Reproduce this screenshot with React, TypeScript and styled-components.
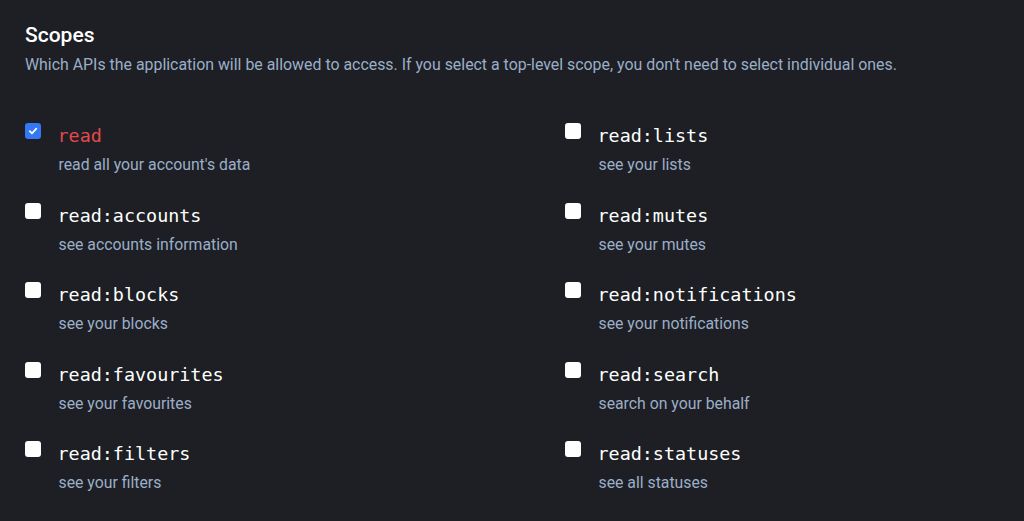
import React from "react";
import styled, { createGlobalStyle } from "styled-components";

const Global = createGlobalStyle`
  html, body { margin: 0; padding: 0; background: #1d1f24; }
  body { font-family: Roboto, "Noto Sans", sans-serif; }
`;

const Page = styled.div`
  padding: 23px 25px 0 25px;
  min-height: 521px;
  box-sizing: border-box;
  background: #1d1f24;
`;

const Title = styled.h2`
  margin: 0;
  font-size: 21px;
  line-height: 24px;
  font-weight: 500;
  color: #ffffff;
`;

const Subtitle = styled.p`
  margin: 8px 0 0 0;
  font-size: 15.9px;
  line-height: 20px;
  color: #9baec8;
`;

const Grid = styled.div`
  margin-top: 48px;
  display: grid;
  grid-template-columns: 540px 1fr;
  row-gap: 27.5px;
`;

const Item = styled.label`
  display: flex;
  align-items: flex-start;
  gap: 18px;
  cursor: pointer;
`;

const Box = styled.span<{ $checked?: boolean }>`
  flex: none;
  width: 16px;
  height: 16px;
  border-radius: 3px;
  box-sizing: border-box;
  background: ${(p) => (p.$checked ? "#3478f6" : "#ffffff")};
  display: flex;
  align-items: center;
  justify-content: center;
`;

const Texts = styled.div`
  display: flex;
  flex-direction: column;
  padding-top: 1px;
`;

const Name = styled.code<{ $danger?: boolean }>`
  margin-left: -1.5px;
  font-family: "DejaVu Sans Mono", "Liberation Mono", monospace;
  font-size: 18.4px;
  line-height: 24px;
  color: ${(p) => (p.$danger ? "#e5484d" : "#ffffff")};
`;

const Hint = styled.span`
  margin-top: 7px;
  margin-left: -0.5px;
  font-size: 15.8px;
  line-height: 20px;
  color: #9baec8;
`;

const scopes: { name: string; hint: string; checked?: boolean; danger?: boolean }[] = [
  { name: "read", hint: "read all your account's data", checked: true, danger: true },
  { name: "read:lists", hint: "see your lists" },
  { name: "read:accounts", hint: "see accounts information" },
  { name: "read:mutes", hint: "see your mutes" },
  { name: "read:blocks", hint: "see your blocks" },
  { name: "read:notifications", hint: "see your notifications" },
  { name: "read:favourites", hint: "see your favourites" },
  { name: "read:search", hint: "search on your behalf" },
  { name: "read:filters", hint: "see your filters" },
  { name: "read:statuses", hint: "see all statuses" },
];

export default function App() {
  return (
    <>
      <Global />
      <Page>
        <Title>Scopes</Title>
        <Subtitle>
          Which APIs the application will be allowed to access. If you select a top-level scope, you don't need to select individual ones.
        </Subtitle>
        <Grid>
          {scopes.map((s) => (
            <Item key={s.name}>
              <Box $checked={s.checked}>
                {s.checked && (
                  <svg width="10" height="10" viewBox="0 0 10 10">
                    <path d="M1.8 5.2 L4 7.4 L8.3 2.6" fill="none" stroke="#fff" strokeWidth="1.7" strokeLinecap="round" strokeLinejoin="round" />
                  </svg>
                )}
              </Box>
              <Texts>
                <Name $danger={s.danger}>{s.name}</Name>
                <Hint>{s.hint}</Hint>
              </Texts>
            </Item>
          ))}
        </Grid>
      </Page>
    </>
  );
}
